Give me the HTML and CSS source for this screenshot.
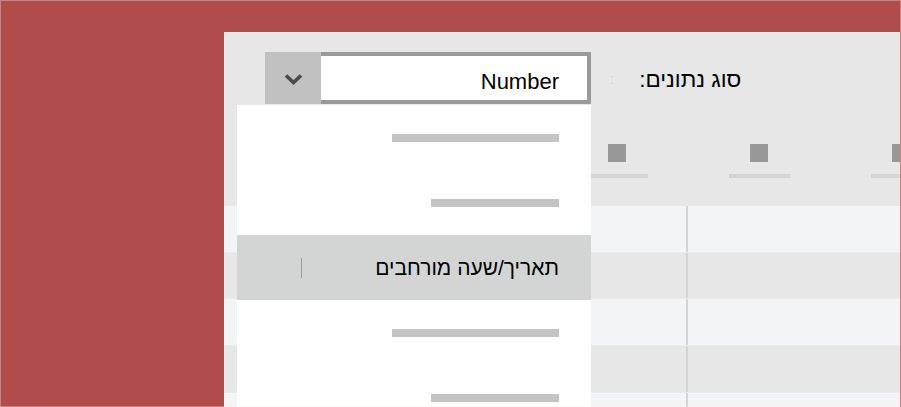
FILE: index.html
```html
<!DOCTYPE html>
<html lang="he">
<head>
    <meta charset="UTF-8">
    <meta name="viewport" content="width=device-width, initial-scale=1.0">
    <title>סוג נתונים</title>
    <link rel="stylesheet" href="styles.css">
</head>
<body>

    <div class="panel">

        <!-- Data type picker -->
        <div class="toolbar">
            <div class="picker">
                <div class="picker-button">
                    <svg width="19" height="12" viewBox="0 0 19 12">
                        <polyline points="2,2.5 9.5,9.5 17,2.5" fill="none" stroke="#4b4b4b" stroke-width="3.6"/>
                    </svg>
                </div>
                <div class="picker-value">Number</div>
            </div>
            <span class="faint-colon">:</span>
            <span class="picker-label" dir="rtl">סוג נתונים:</span>
        </div>

        <!-- Column headers -->
        <div class="col-heads">
            <div class="col-head"><span class="col-icon"></span><span class="col-line"></span></div>
            <div class="col-head"><span class="col-icon"></span><span class="col-line"></span></div>
            <div class="col-head"><span class="col-icon"></span><span class="col-line"></span></div>
            <div class="col-head"><span class="col-icon"></span><span class="col-line"></span></div>
            <div class="col-head"><span class="col-icon"></span><span class="col-line"></span></div>
        </div>

        <!-- Table rows -->
        <div class="rows">
            <div class="row"><div class="cell"></div><div class="cell"></div></div>
            <div class="row"><div class="cell"></div><div class="cell"></div></div>
            <div class="row"><div class="cell"></div><div class="cell"></div></div>
            <div class="row"><div class="cell"></div><div class="cell"></div></div>
            <div class="row"><div class="cell"></div><div class="cell"></div></div>
        </div>

        <!-- Open menu -->
        <ul class="menu">
            <li class="menu-item"><span class="bar long"></span></li>
            <li class="menu-item"><span class="bar short"></span></li>
            <li class="menu-item selected">
                <span class="caret"></span>
                <span class="menu-text" dir="rtl">תאריך/שעה מורחבים</span>
            </li>
            <li class="menu-item"><span class="bar long"></span></li>
            <li class="menu-item"><span class="bar short"></span></li>
        </ul>

    </div>

</body>
</html>
```

FILE: styles.css
```css
* {
    margin: 0;
    padding: 0;
    box-sizing: border-box;
}

html, body {
    width: 901px;
    height: 407px;
    overflow: hidden;
}

body {
    font-family: "Liberation Sans", Arial, sans-serif;
    background-color: #b04c4a;
    color: #000;
    padding: 32px 0 0 224px;
    position: relative;
}

/* thin light frame round the whole view */
body::after {
    content: "";
    position: absolute;
    inset: 0;
    border: 1px solid rgba(255, 235, 225, 0.35);
    pointer-events: none;
}

/* Panel */
.panel {
    width: 676px;
    height: 375px;
    background-color: #e6e7e6;
    position: relative;
    overflow: hidden;
}

/* Toolbar */
.toolbar {
    height: 73px;
    padding: 20px 0 0 41px;
    display: flex;
    align-items: flex-start;
}

.picker {
    display: flex;
    height: 52px;
}

.picker-button {
    width: 56px;
    background: #c1c1c1;
    display: flex;
    align-items: center;
    justify-content: center;
    padding-top: 1px;
}

.picker-value {
    width: 270px;
    background: #fff;
    border: 4px solid #9a9a9a;
    border-left: none;
    font-size: 22px;
    line-height: 44px;
    padding-top: 4px;
    text-align: right;
    padding-right: 28px;
}

.faint-colon {
    margin: 17px 0 0 19px;
    font-size: 15px;
    color: #cfcfcf;
    line-height: 20px;
}

.picker-label {
    margin: 16px 0 0 25px;
    font-size: 22.5px;
    line-height: 24px;
}

/* Column headers */
.col-heads {
    height: 101px;
    padding-left: 38px;
    display: flex;
}

.col-head {
    flex: 0 0 142px;
    display: flex;
    flex-direction: column;
    align-items: center;
    padding-top: 39px;
}

.col-icon {
    width: 18px;
    height: 18px;
    background: #989898;
}

.col-line {
    width: 61px;
    height: 4px;
    margin-top: 12px;
    background: #d3d4d3;
}

/* Rows */
.row {
    height: 46.67px;
    display: grid;
    grid-template-columns: 464px 1fr;
    background: #f3f4f6;
    border-bottom: 1px solid #ebebeb;
}

.row:nth-child(even) {
    background: #e6e7e6;
}

.row .cell:first-child {
    border-right: 2px solid #d4d4d4;
}

/* Menu */
.menu {
    position: absolute;
    left: 13px;
    top: 73px;
    width: 354px;
    background: #fff;
    list-style: none;
}

.menu-item {
    height: 65px;
    display: flex;
    align-items: center;
    justify-content: flex-end;
    padding-right: 32px;
}

.menu-item.selected {
    background: #d3d5d4;
    justify-content: space-between;
    padding-left: 64px;
}

.bar {
    height: 8px;
    background: #c4c4c4;
}

.bar.long {
    width: 167px;
}

.bar.short {
    width: 128px;
}

.caret {
    width: 1px;
    height: 20px;
    background: #9c9c9c;
}

.menu-text {
    font-size: 21px;
    padding-top: 1px;
}
```
